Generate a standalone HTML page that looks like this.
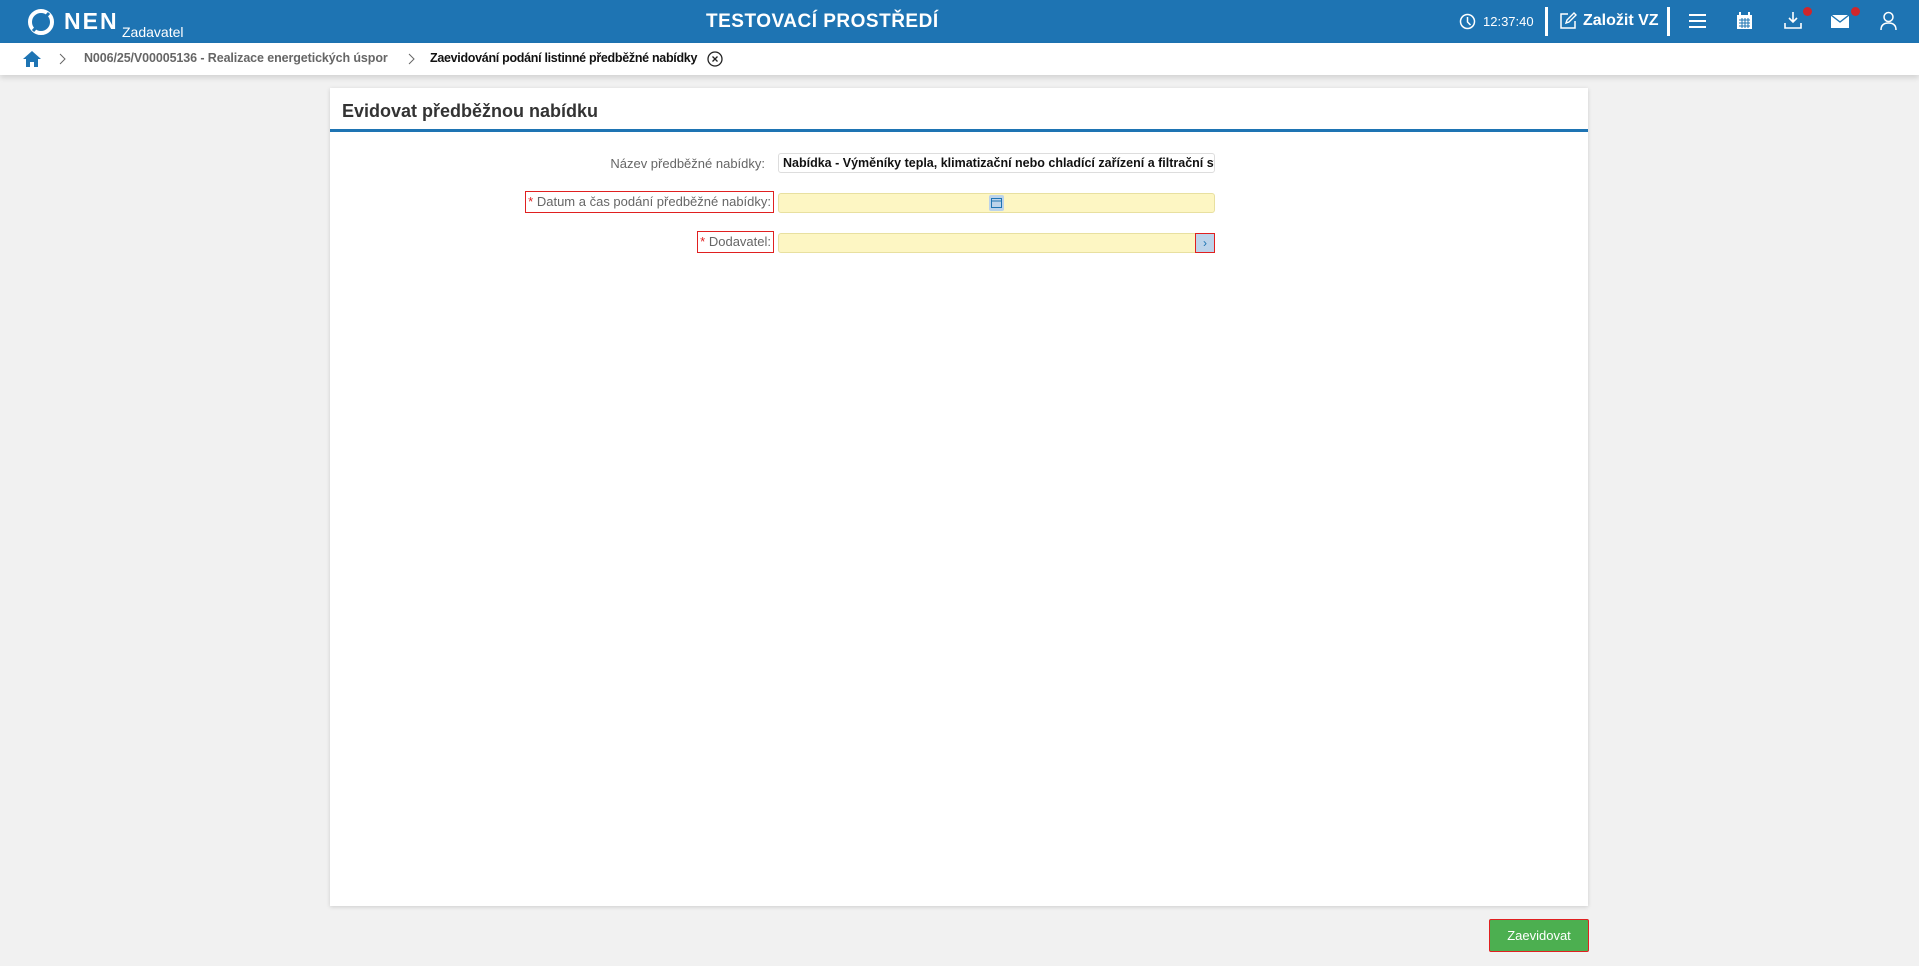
<!DOCTYPE html>
<html><head><meta charset="utf-8"><style>
*{box-sizing:border-box;margin:0;padding:0}
body{width:1919px;height:966px;background:#f1f1f1;font-family:"Liberation Sans",sans-serif;position:relative;overflow:hidden}
.hdr{position:absolute;left:0;top:0;width:1919px;height:43px;background:#1e74b3;color:#fff}
.abs{position:absolute}
.bc{position:absolute;top:43px;left:0;width:1919px;height:32px;background:#fff;box-shadow:0 3px 5px rgba(0,0,0,.12);font-size:13px;color:#555}
.panel{position:absolute;left:330px;top:88px;width:1258px;height:818px;background:#fff;box-shadow:0 1px 4px rgba(0,0,0,.15)}
.row{position:absolute;left:0;width:437px;text-align:right;font-size:13px;color:#666;white-space:nowrap;line-height:18px}
.row span.b{display:inline-block;padding:1px 2px}
.inp{position:absolute;left:448px;width:437px;height:20px;border:1px solid #ddd;border-radius:3px}
.req{outline:1px solid #e02020}
</style></head><body>
<div class="hdr">
 <svg class="abs" style="left:26px;top:7px" width="30" height="30" viewBox="0 0 30 30"><circle cx="15" cy="15" r="11" fill="none" stroke="#fff" stroke-width="4"/><path d="M7 24 L23 6" stroke="#1e74b3" stroke-width="3"/></svg>
 <div class="abs" style="left:64px;top:8px;font-size:23px;font-weight:bold;letter-spacing:2px">NEN</div>
 <div class="abs" style="left:122px;top:24px;font-size:14px">Zadavatel</div>
 <div class="abs" style="left:706px;top:11px;font-size:19px;font-weight:bold;letter-spacing:.5px">TESTOVACÍ PROSTŘEDÍ</div>
 <svg class="abs" style="left:1459px;top:13px" width="17" height="17" viewBox="0 0 17 17"><circle cx="8.5" cy="8.5" r="7" fill="none" stroke="#fff" stroke-width="1.5"/><path d="M8.5 4v5l3 3" fill="none" stroke="#fff" stroke-width="1.5"/></svg>
 <div class="abs" style="left:1483px;top:14px;font-size:13px">12:37:40</div>
 <div class="abs" style="left:1545px;top:7px;width:3px;height:29px;background:#fff"></div>
 <svg class="abs" style="left:1559px;top:12px" width="18" height="18" viewBox="0 0 18 18"><path d="M9 2H2v14h14V9" fill="none" stroke="#fff" stroke-width="1.5"/><path d="M7 11l1-3 7-7 2 2-7 7z" fill="none" stroke="#fff" stroke-width="1.4"/></svg>
 <div class="abs" style="left:1583px;top:12px;font-size:16px;font-weight:bold">Založit VZ</div>
 <div class="abs" style="left:1667px;top:7px;width:3px;height:29px;background:#fff"></div>
 <svg class="abs" style="left:1689px;top:13px" width="17" height="16"><path d="M0 2h17M0 8h17M0 14h17" stroke="#fff" stroke-width="2"/></svg>
 <svg class="abs" style="left:1736px;top:12px" width="17" height="18" viewBox="0 0 17 18"><rect x="1" y="3" width="15" height="14" fill="#fff"/><path d="M4 0v4M13 0v4" stroke="#fff" stroke-width="2"/><path d="M3 8h11M3 11h11M3 14h11M6 6v10M9 6v10M12 6v10" stroke="#1e74b3"/></svg>
 <svg class="abs" style="left:1784px;top:11px" width="18" height="19" viewBox="0 0 18 19"><path d="M9 1v10M5 7l4 4 4-4M1 12v5h16v-5" fill="none" stroke="#fff" stroke-width="1.6"/></svg>
 <div class="abs" style="left:1803px;top:7px;width:9px;height:9px;border-radius:50%;background:#d0262b"></div>
 <svg class="abs" style="left:1831px;top:15px" width="18" height="13"><rect width="18" height="13" fill="#fff"/><path d="M0 0l9 7 9-7" fill="none" stroke="#1e74b3" stroke-width="1.3"/></svg>
 <div class="abs" style="left:1851px;top:7px;width:9px;height:9px;border-radius:50%;background:#d0262b"></div>
 <svg class="abs" style="left:1880px;top:11px" width="17" height="19" viewBox="0 0 17 19"><circle cx="8.5" cy="6" r="4.5" fill="none" stroke="#fff" stroke-width="1.5"/><path d="M1 19c0-5 3-7 7.5-7s7.5 2 7.5 7" fill="none" stroke="#fff" stroke-width="1.5"/></svg>
</div>
<div class="bc">
 <svg class="abs" style="left:23px;top:8px" width="18" height="16" viewBox="0 0 18 16"><path d="M9 0L0 8h3v8h4v-5h4v5h4V8h3z" fill="#1e74b3"/></svg>
 <svg class="abs" style="left:59px;top:10px" width="7" height="12"><path d="M1 1l5 5-5 5" fill="none" stroke="#666"/></svg>
 <div class="abs" style="left:84px;top:8px;font-weight:bold;color:#666;font-size:12.5px;letter-spacing:-.1px">N006/25/V00005136 - Realizace energetických úspor</div>
 <svg class="abs" style="left:408px;top:10px" width="7" height="12"><path d="M1 1l5 5-5 5" fill="none" stroke="#666"/></svg>
 <div class="abs" style="left:430px;top:8px;font-weight:bold;color:#111;font-size:12.5px;letter-spacing:-.3px">Zaevidování podání listinné předběžné nabídky</div>
 <svg class="abs" style="left:707px;top:8px" width="16" height="16"><circle cx="8" cy="8" r="7" fill="none" stroke="#222" stroke-width="1.3"/><path d="M5.5 5.5l5 5M10.5 5.5l-5 5" stroke="#222" stroke-width="1.3"/></svg>
</div>
<div class="panel">
 <div class="abs" style="left:12px;top:13px;font-size:18px;font-weight:bold;color:#333">Evidovat předběžnou nabídku</div>
 <div class="abs" style="left:0;top:41px;width:1258px;height:3px;background:#1e74b3"></div>
 <div class="row" style="top:66px"><span class="b">Název předběžné nabídky:</span></div>
 <div class="inp" style="top:65px;background:#fff;font-size:12.5px;font-weight:bold;color:#111;padding:2px 4px;overflow:hidden;white-space:nowrap">Nabídka - Výměníky tepla, klimatizační nebo chladící zařízení a filtrační stroje</div>
 <div class="row" style="top:104px;width:443px"><span class="b req"><span style="color:#e02020">*</span> Datum a čas podání předběžné nabídky:</span></div>
 <div class="inp" style="top:105px;background:#fdf6c3;border-color:#e8e0a0"><div class="abs" style="left:210px;top:1px;width:15px;height:16px;background:#bcd3ea;border-radius:2px"><svg class="abs" style="left:2px;top:2px" width="11" height="11"><rect x=".5" y="1.5" width="10" height="9" fill="none" stroke="#1e74b3"/><path d="M0 4h11" stroke="#1e74b3"/></svg></div></div>
 <div class="row" style="top:144px;width:443px"><span class="b req"><span style="color:#e02020">*</span> Dodavatel:</span></div>
 <div class="inp" style="top:145px;background:#fdf6c3;border-color:#e8e0a0"><div class="abs req" style="right:0;top:0;width:18px;height:18px;background:#bcd3ea;color:#1e74b3;font-size:12px;text-align:center;line-height:18px">›</div></div>
</div>
<div class="abs" style="left:1489px;top:919px;width:100px;height:33px;background:#4caf50;border:1px solid #e02020;border-radius:2px;color:#fff;font-size:13px;text-align:center;line-height:31px">Zaevidovat</div>
</body></html>
